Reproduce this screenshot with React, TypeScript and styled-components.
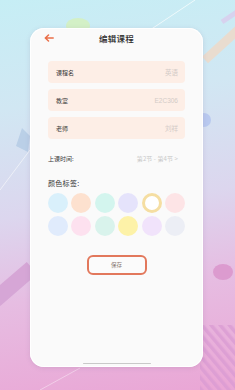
import React from "react";
import styled, { createGlobalStyle } from "styled-components";

const Global = createGlobalStyle`
  html, body { margin: 0; padding: 0; }
  body {
    width: 235px;
    height: 390px;
    overflow: hidden;
    font-family: "Noto Sans CJK SC", "Noto Sans", sans-serif;
  }
`;

const Page = styled.div`
  position: relative;
  width: 235px;
  height: 390px;
  overflow: hidden;
  background: linear-gradient(172deg, #c6eef5 0%, #d1e7f3 26%, #dcd6ee 52%, #e6bde2 72%, #eaa6d5 100%);
  padding: 28px 0 0 30px;
  box-sizing: border-box;
`;

const Backdrop = styled.svg`
  position: absolute;
  inset: 0;
  width: 235px;
  height: 390px;
`;

const Phone = styled.div`
  position: relative;
  width: 173px;
  height: 339px;
  border-radius: 14px;
  background: #fafafa;
  box-shadow: 0 1px 5px rgba(120, 100, 140, 0.18), inset 0 0 0 1px rgba(255, 255, 255, 0.9);
  display: flex;
  flex-direction: column;
  padding: 0 18px;
  box-sizing: border-box;
`;

const Header = styled.div`
  height: 19px;
  display: grid;
  grid-template-columns: 1fr auto 1fr;
  align-items: center;
  margin: 0 -4px;
`;

const Back = styled.svg`
  width: 10px;
  height: 8px;
`;

const Title = styled.div`
  font-size: 8.5px;
  font-weight: 500;
  color: #2d2d2d;
  letter-spacing: 0.2px;
`;

const Fields = styled.div`
  display: flex;
  flex-direction: column;
  gap: 6px;
  margin-top: 14px;
`;

const Field = styled.div`
  height: 22px;
  border-radius: 4px;
  background: #fdeee6;
  display: flex;
  align-items: center;
  justify-content: space-between;
  padding: 0 7px 0 8px;
`;

const Label = styled.span`
  font-size: 6px;
  color: #3a3a3a;
`;

const Value = styled.span`
  font-size: 6.5px;
  color: #d3cbc7;
  font-family: "Liberation Sans", "Noto Sans CJK SC", sans-serif;
`;

const TimeRow = styled.div`
  display: flex;
  align-items: center;
  justify-content: space-between;
  height: 16px;
  margin-top: 11px;
  padding: 0 7px 0 0;
`;

const TimeValue = styled.span`
  font-size: 6px;
  color: #c8c8c8;
  letter-spacing: 0.1px;
`;

const SectionTitle = styled.div`
  font-size: 7px;
  color: #333;
  margin-top: 12px;
  letter-spacing: 0.3px;
`;

const Swatches = styled.div`
  display: grid;
  grid-template-columns: repeat(6, 20px);
  justify-content: space-between;
  row-gap: 3px;
  margin-top: 5px;
`;

const Swatch = styled.div<{ $c: string; $sel?: boolean }>`
  width: 20px;
  height: 20px;
  border-radius: 50%;
  box-sizing: border-box;
  background: ${(p) => (p.$sel ? "#ffffff" : p.$c)};
  border: ${(p) => (p.$sel ? `3px solid ${p.$c}` : "none")};
`;

const SaveButton = styled.button`
  align-self: center;
  margin-top: 19px;
  width: 60px;
  height: 20px;
  border: 2px solid #e2785c;
  border-radius: 6px;
  background: #fbfbfb;
  font-family: "Noto Sans CJK SC", sans-serif;
  font-size: 5.5px;
  color: #8a7a74;
  padding: 0;
`;

const HomeBar = styled.div`
  align-self: center;
  margin-top: auto;
  margin-bottom: 3px;
  width: 68px;
  height: 1.5px;
  border-radius: 1px;
  background: #c9c9c9;
`;

const fields = [
  { label: "课程名", value: "英语" },
  { label: "教室", value: "E2C306" },
  { label: "老师", value: "刘祥" },
];

const colors = [
  { c: "#d9f0fb" },
  { c: "#fde1cf" },
  { c: "#d3f5ee" },
  { c: "#e5e3fb" },
  { c: "#f5dea2", sel: true },
  { c: "#fde4e6" },
  { c: "#e0ebfc" },
  { c: "#fde1ef" },
  { c: "#d9f3ec" },
  { c: "#fdf2a8" },
  { c: "#f1e3fb" },
  { c: "#eceef5" },
];

export default function App() {
  return (
    <Page>
      <Global />
      <Backdrop viewBox="0 0 235 390">
        <defs>
          <pattern id="stripes" width="7" height="7" patternUnits="userSpaceOnUse" patternTransform="rotate(-40)">
            <rect width="3.5" height="7" fill="#d99bd3" opacity="0.75" />
          </pattern>
        </defs>
        <line x1="150" y1="30" x2="195" y2="0" stroke="#ffffff" strokeWidth="1" opacity="0.7" />
        <line x1="205" y1="60" x2="240" y2="28" stroke="#e9dccf" strokeWidth="9" />
        <line x1="222" y1="22" x2="240" y2="10" stroke="#d7d2ee" strokeWidth="5" />
        <ellipse cx="78" cy="26" rx="12" ry="8" fill="#d3f0c6" />
        <circle cx="204" cy="120" r="7" fill="#b9c9ef" />
        <polygon points="22,128 30,136 28,152 16,146" fill="#b7cde6" opacity="0.9" />
        <line x1="0" y1="190" x2="30" y2="150" stroke="#ffffff" strokeWidth="0.8" opacity="0.7" />
        <line x1="-5" y1="300" x2="32" y2="268" stroke="#d6a6d6" strokeWidth="16" />
        <ellipse cx="223" cy="272" rx="10" ry="8" fill="#dc9bcf" />
        <rect x="200" y="325" width="40" height="70" fill="url(#stripes)" />
        <line x1="40" y1="390" x2="80" y2="368" stroke="#ffffff" strokeWidth="0.8" opacity="0.5" />
      </Backdrop>
      <Phone>
        <Header>
          <Back viewBox="0 0 10 8">
            <path d="M9.2 4H1.5M4.5 1L1.3 4L4.5 7" fill="none" stroke="#ea6f48" strokeWidth="1.5" strokeLinecap="round" strokeLinejoin="round" />
          </Back>
          <Title>编辑课程</Title>
          <span />
        </Header>
        <Fields>
          {fields.map((f) => (
            <Field key={f.label}>
              <Label>{f.label}</Label>
              <Value>{f.value}</Value>
            </Field>
          ))}
        </Fields>
        <TimeRow>
          <Label>上课时间:</Label>
          <TimeValue>第2节 - 第4节 &gt;</TimeValue>
        </TimeRow>
        <SectionTitle>颜色标签:</SectionTitle>
        <Swatches>
          {colors.map((s, i) => (
            <Swatch key={i} $c={s.c} $sel={s.sel} />
          ))}
        </Swatches>
        <SaveButton>保存</SaveButton>
        <HomeBar />
      </Phone>
    </Page>
  );
}
